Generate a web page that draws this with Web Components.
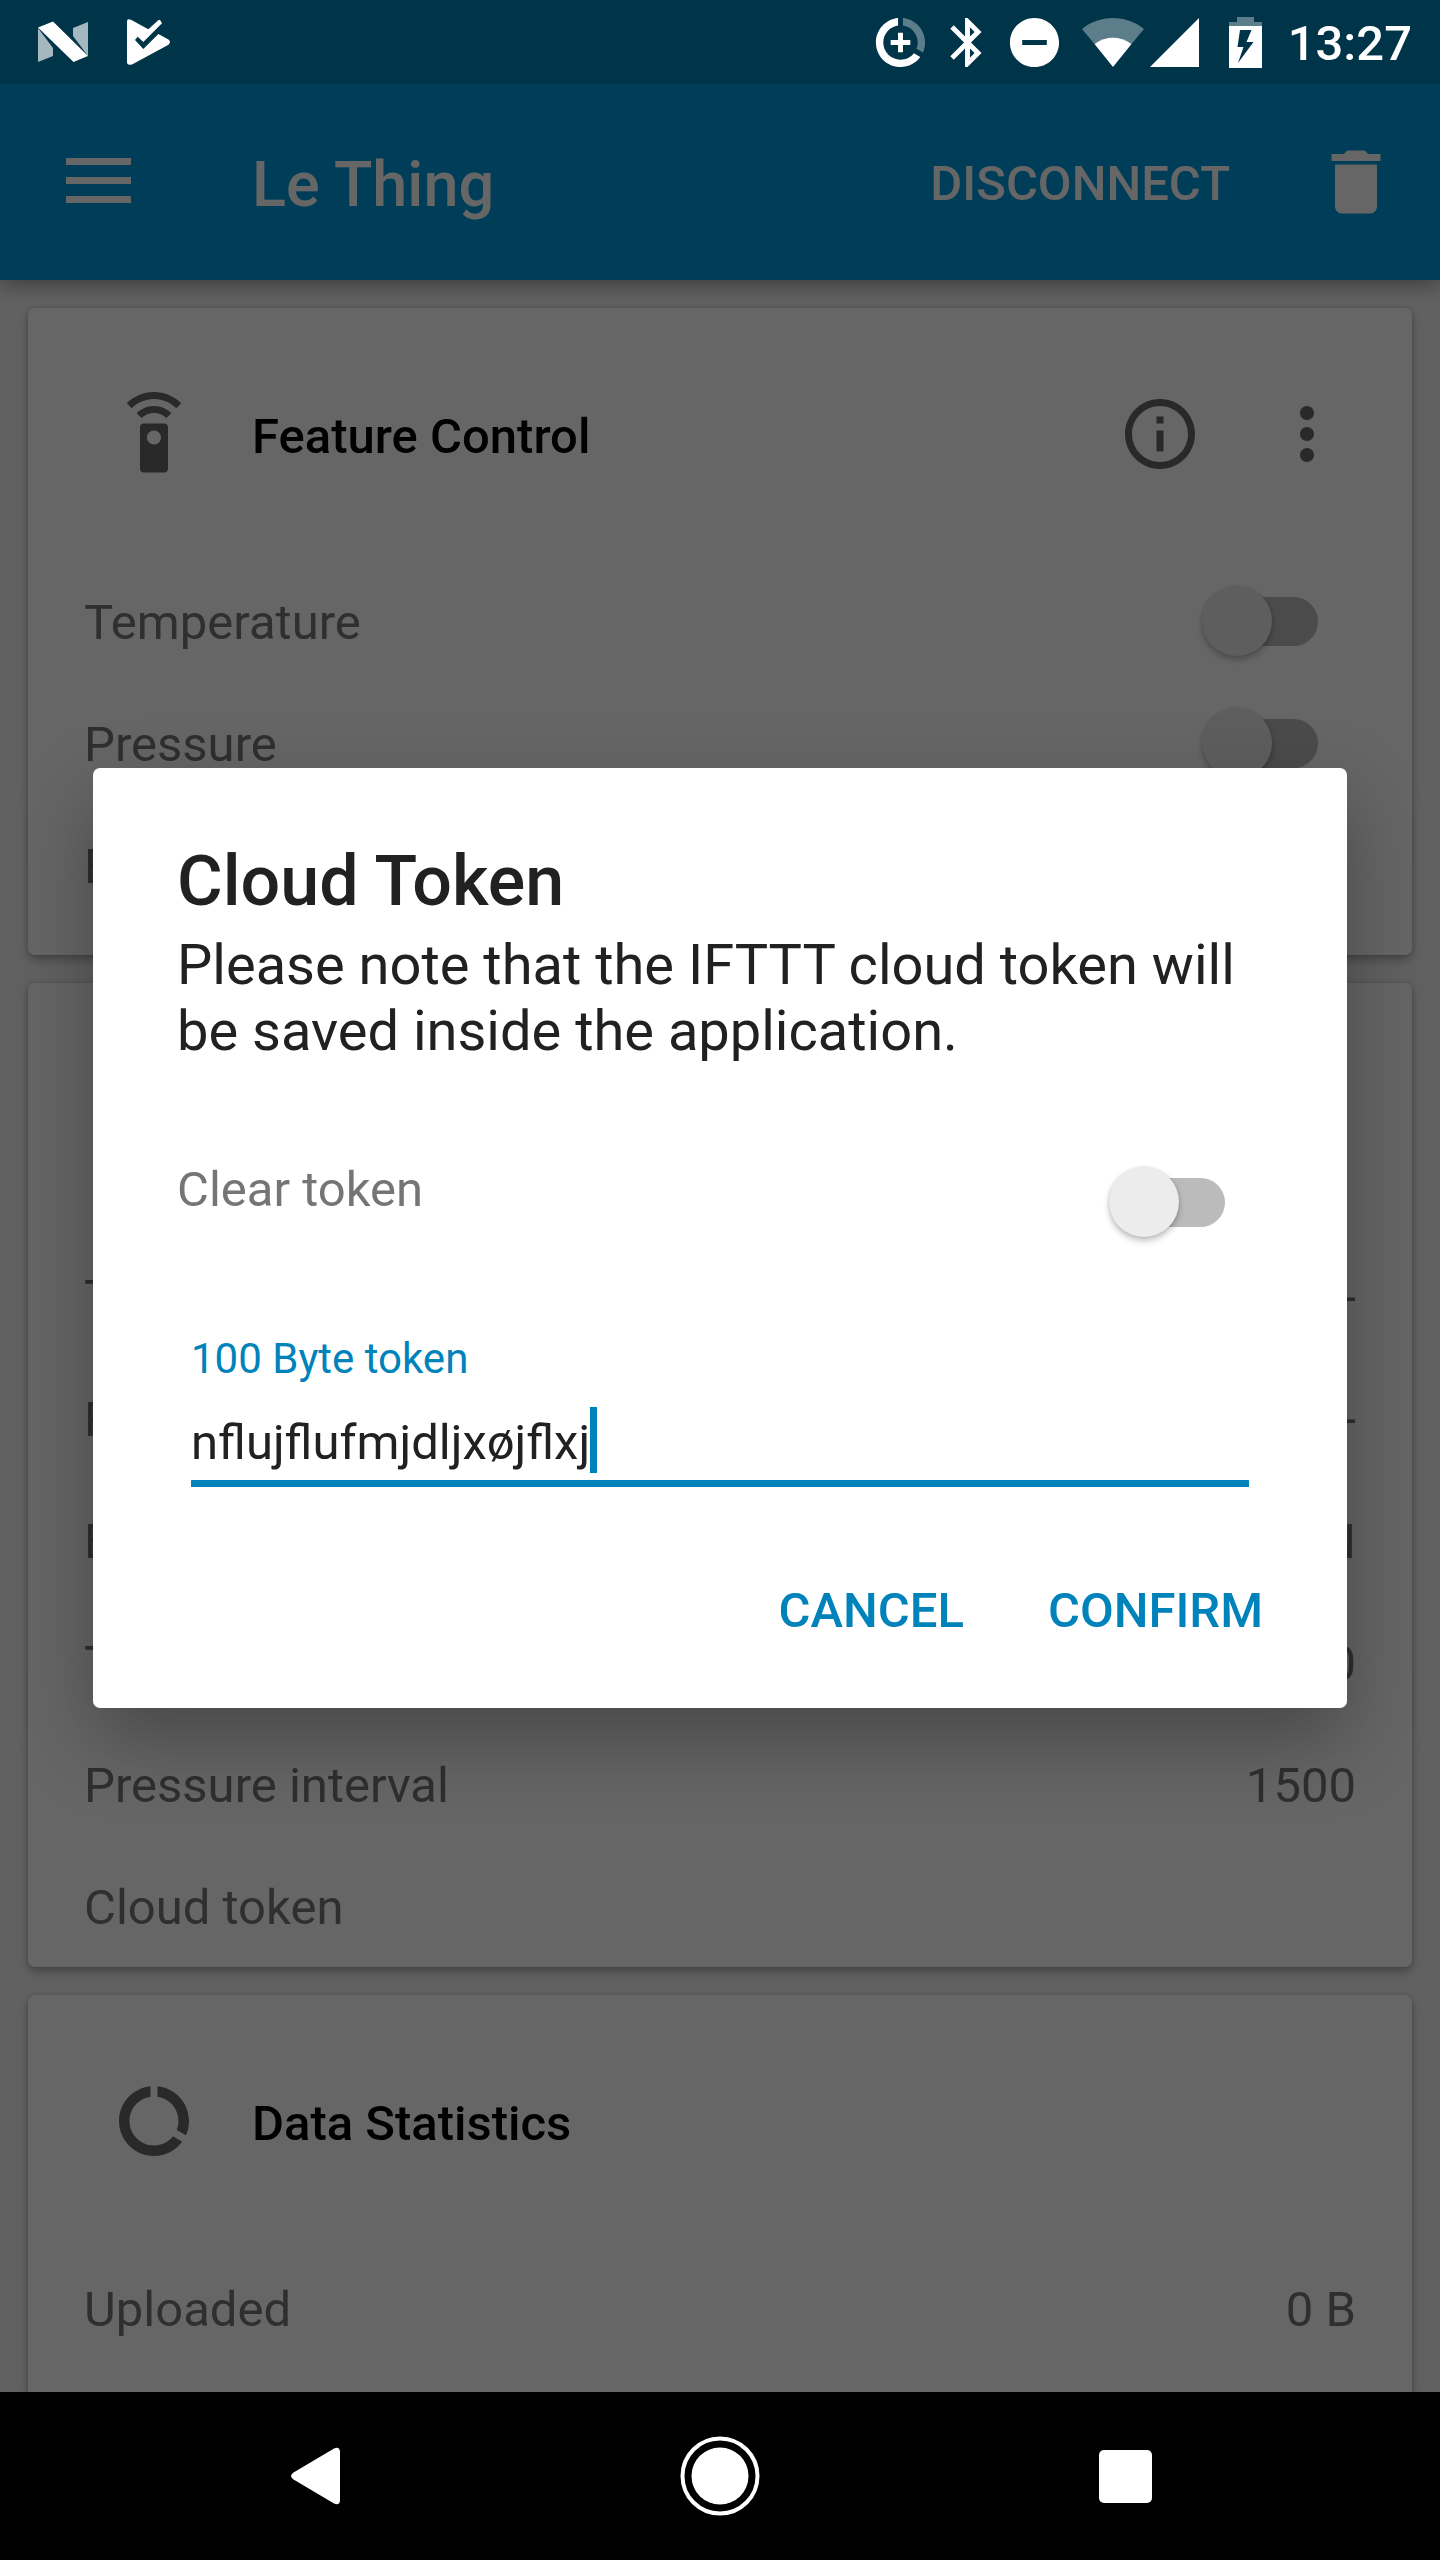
<!DOCTYPE html>
<html lang="en">
<head>
<meta charset="utf-8">
<meta name="viewport" content="width=device-width, initial-scale=1">
<title>Le Thing</title>
<style>
  html, body { margin: 0; background: #000; }
  body {
    --primary: #009ade;
    --accent: #0082ba;
    --status: #003448;
    --grey-text: #757575;
    --icon: #666;
    font-family: Roboto, "Noto Sans", sans-serif;
    font-size: 49px;
    line-height: 58px;
  }
</style>
</head>
<body>
<thing-app>
  <status-bar slot="status" time="13:27"></status-bar>
  <app-bar slot="bar" action="DISCONNECT">Le Thing</app-bar>

  <feature-card icon="remote" actions roomy>
    <span slot="title">Feature Control</span>
    <toggle-row label="Temperature"></toggle-row>
    <toggle-row label="Pressure"></toggle-row>
    <toggle-row label="Button"></toggle-row>
  </feature-card>

  <feature-card icon="usage">
    <span slot="title">Cloud</span>
    <value-row label="Temperature">-</value-row>
    <value-row label="Pressure">-</value-row>
    <value-row label="Button">UNKNOWN</value-row>
    <value-row label="Temperature interval">1500</value-row>
    <value-row label="Pressure interval">1500</value-row>
    <value-row label="Cloud token"></value-row>
  </feature-card>

  <feature-card icon="usage" roomy>
    <span slot="title">Data Statistics</span>
    <value-row label="Uploaded">0 B</value-row>
  </feature-card>

  <token-dialog slot="dialog" heading="Cloud Token" field="100 Byte token" value="nflujflufmjdljxøjflxj">
    Please note that the IFTTT cloud token will be saved inside the application.
  </token-dialog>
  <nav-bar slot="nav"></nav-bar>
</thing-app>

<script>
const ICONS = {
  remote: '<path d="M15 9H9c-.55 0-1 .45-1 1v12c0 .55.45 1 1 1h6c.55 0 1-.45 1-1V10c0-.55-.45-1-1-1zm-3 6c-1.1 0-2-.9-2-2s.9-2 2-2 2 .9 2 2-.9 2-2 2zM7.05 6.05l1.41 1.41C9.37 6.56 10.62 6 12 6s2.63.56 3.54 1.46l1.41-1.41C15.68 4.78 13.93 4 12 4s-3.68.78-4.95 2.05zM12 0C8.96 0 6.21 1.23 4.22 3.22l1.41 1.41C7.26 3.01 9.51 2 12 2s4.74 1.01 6.36 2.64l1.41-1.41C17.79 1.23 15.04 0 12 0z"/>',
  usage: '<path d="M13 2.05v3.03c3.39.49 6 3.39 6 6.92 0 .9-.18 1.75-.48 2.54l2.6 1.53c.56-1.24.88-2.62.88-4.07 0-5.18-3.95-9.45-9-9.95zM12 19c-3.87 0-7-3.13-7-7 0-3.53 2.61-6.43 6-6.92V2.05c-5.06.5-9 4.76-9 9.95 0 5.52 4.47 10 9.99 10 3.31 0 6.24-1.61 8.06-4.09l-2.6-1.53C16.17 17.98 14.21 19 12 19z"/>',
  info: '<path d="M11 17h2v-6h-2v6zm1-15C6.48 2 2 6.48 2 12s4.48 10 10 10 10-4.48 10-10S17.52 2 12 2zm0 18c-4.41 0-8-3.59-8-8s3.59-8 8-8 8 3.59 8 8-3.59 8-8 8zM11 9h2V7h-2v2z"/>',
  more: '<path d="M12 8c1.1 0 2-.9 2-2s-.9-2-2-2-2 .9-2 2 .9 2 2 2zm0 2c-1.1 0-2 .9-2 2s.9 2 2 2 2-.9 2-2-.9-2-2-2zm0 6c-1.1 0-2 .9-2 2s.9 2 2 2 2-.9 2-2-.9-2-2-2z"/>',
  trash: '<path d="M6 19c0 1.1.9 2 2 2h8c1.1 0 2-.9 2-2V7H6v12zM19 4h-3.5l-1-1h-5l-1 1H5v2h14V4z"/>'
};
const icon = name => `<svg class="icon" viewBox="0 0 24 24" aria-hidden="true">${ICONS[name]}</svg>`;

const BASE = `
  :host, *, *::before, *::after { box-sizing: border-box; }
  :host { display: block; }
  svg { display: block; flex: none; fill: currentColor; }
  .icon { width: 84px; height: 84px; }
  button { margin: 0; padding: 0; border: 0; background: none; color: inherit; font: inherit; cursor: pointer; }
`;

class Base extends HTMLElement {
  connectedCallback() {
    if (this.shadowRoot) return;
    const root = this.attachShadow({ mode: "open" });
    root.innerHTML = `<style>${BASE}${this.css()}</style>${this.html()}`;
  }
  attr(name) { return this.getAttribute(name) || ""; }
}

class ThingApp extends Base {
  css() { return `
    :host { display: flex; flex-direction: column; height: 100vh; }
    .screen { position: relative; flex: 1; min-height: 0; overflow: hidden; background: #f2f2f2; }
    .cards { display: flex; flex-direction: column; gap: 28px; padding: 28px; }
    .scrim { position: absolute; inset: 0; display: grid; align-items: center; padding: 0 93px; background: rgba(0,0,0,.6); }
  `; }
  html() { return `
    <slot name="status"></slot>
    <div class="screen">
      <slot name="bar"></slot>
      <main class="cards"><slot></slot></main>
      <div class="scrim"><slot name="dialog"></slot></div>
    </div>
    <slot name="nav"></slot>`; }
}

class StatusBar extends Base {
  css() { return `
    :host { display: flex; flex: none; align-items: center; justify-content: space-between; height: 84px; padding: 0 28px 0 38px; background: var(--status); color: #fff; }
    .notes, .system { display: flex; align-items: center; }
    .notes { gap: 39px; }
    .radios { display: flex; gap: 8px; }
    .signals { display: flex; gap: 6px; margin: 0 30px 0 18px; }
    time { margin-left: 26px; padding-top: 4px; font-weight: 500; }
    .dim { opacity: .36; }
    .half { opacity: .65; }
  `; }
  html() { return `
    <div class="notes">
      <svg width="50" height="42" viewBox="0 0 50 42" aria-hidden="true">
        <path class="half" d="M0 7 15 27V35L0 41zM35 7 50 1V35L35 15z"/>
        <path d="M0 6.500 15 .500 50 35 35.500 41z"/>
      </svg>
      <svg width="43" height="46" viewBox="0 0 43 46" aria-hidden="true">
        <path d="M0 2.500Q0-1 4 .800L21.300 10.300 31.500 1 33 1 35 4.300 16.300 23 10.700 17.700 8 21 16.300 30 31.400 15 41.500 20.500Q44.500 23 41.500 25.800L5.500 45.200Q0 47 0 43z"/>
      </svg>
    </div>
    <div class="system">
      <div class="radios">
        <svg width="59" height="59" viewBox="0 0 24 24" aria-hidden="true">
          <path d="M11 2.050v3.030c-3.390.49-6 3.390-6 6.920 0 3.870 3.130 7 7 7 2.210 0 4.170-1.020 5.450-2.620l2.600 1.530C18.240 20.390 15.310 22 12 22 6.480 22 2 17.520 2 12c0-5.190 3.940-9.450 9-9.950zM11 8h2v3h3v2h-3v3h-2v-3H8v-2h3z"/>
          <path class="dim" d="M13 2.050v3.030c3.390.49 6 3.390 6 6.920 0 .9-.18 1.750-.48 2.540l2.600 1.530c.56-1.240.88-2.620.88-4.070 0-5.180-3.950-9.450-9-9.950z"/>
        </svg>
        <svg width="59" height="59" viewBox="0 0 24 24" aria-hidden="true"><path d="M17.710 7.710L12 2h-1v7.590L6.410 5 5 6.410 10.590 12 5 17.590 6.410 19 11 14.410V22h1l5.710-5.710-4.300-4.290 4.300-4.290zM13 5.830l1.880 1.880L13 9.590V5.830zm1.880 10.460L13 18.170v-3.760l1.880 1.880z"/></svg>
        <svg width="59" height="59" viewBox="0 0 24 24" aria-hidden="true"><path d="M12 2C6.480 2 2 6.480 2 12s4.480 10 10 10 10-4.480 10-10S17.520 2 12 2zm5 11H7v-2h10v2z"/></svg>
      </div>
      <div class="signals">
        <svg width="62" height="49" viewBox="0 0 62 49" aria-hidden="true">
          <path class="dim" d="M31 0C19 0 8.500 4 0 11L12.500 26Q21 19.500 31 19.500T49.500 26L62 11C53.500 4 43 0 31 0z"/>
          <path d="M31 49 12.500 26Q21 19.500 31 19.500T49.500 26z"/>
        </svg>
        <svg width="49" height="49" viewBox="0 0 49 49" aria-hidden="true"><path d="M49 0V49H0z"/></svg>
      </div>
      <svg width="33" height="51" viewBox="0 0 33 51" aria-hidden="true">
        <path class="dim" d="M8 0H25V5H33V9H0V5H8z"/>
        <path fill-rule="evenodd" d="M0 9H33V51H0zM11 13 8.500 30H14.500L9 46 24.500 25H17.500L22.500 13z"/>
      </svg>
      <time>${this.attr("time")}</time>
    </div>`; }
}

class AppBar extends Base {
  css() { return `
    :host { position: relative; display: flex; align-items: center; height: 196px; padding: 0 42px 0 56px; background: var(--primary); color: #fff; box-shadow: 0 6px 18px rgba(0,0,0,.34); }
    h1 { flex: 1; margin: 0 0 0 112px; padding-top: 6px; font-size: 63px; line-height: 74px; font-weight: 500; }
    .text { padding: 4px 0 0; margin-right: 84px; font-weight: 500; }
  `; }
  html() { return `
    <button aria-label="Menu"><svg width="84" height="84" viewBox="0 0 84 84" aria-hidden="true"><path d="M10 18H75V25H10zM10 37H75V44H10zM10 56H75V63H10z"/></svg></button>
    <h1><slot></slot></h1>
    <button class="text">${this.attr("action")}</button>
    <button aria-label="Delete">${icon("trash")}</button>`; }
}

class FeatureCard extends Base {
  css() { return `
    :host { border-radius: 7px; background: #fff; box-shadow: 0 5px 10px rgba(0,0,0,.26), 0 0 5px rgba(0,0,0,.14); }
    :host([roomy]) { padding-bottom: 29px; }
    header { display: flex; align-items: center; height: 252px; padding: 0 63px 0 84px; color: var(--icon); }
    h2 { flex: 1; margin: 0 0 0 56px; padding-top: 6px; font: inherit; font-weight: 500; color: #000; }
    .actions { display: flex; gap: 63px; }
  `; }
  html() { return `
    <header>
      ${icon(this.attr("icon"))}
      <h2><slot name="title"></slot></h2>
      ${this.hasAttribute("actions") ? `<div class="actions">
        <button aria-label="Information">${icon("info")}</button>
        <button aria-label="More options">${icon("more")}</button>
      </div>` : ""}
    </header>
    <slot></slot>`; }
}

const ROW = `
  :host { display: flex; justify-content: space-between; height: 122px; padding: 34px 56px 30px; color: var(--grey-text); }
`;
const SWITCH = `
  input { appearance: none; display: grid; flex: none; align-items: center; width: 116px; height: 70px; margin: 0 38px 0 0; cursor: pointer; }
  input::before, input::after { content: ""; grid-area: 1 / 1; }
  input::before { height: 49px; margin-left: 12px; border-radius: 25px; background: #bbb; }
  input::after { width: 70px; height: 70px; border-radius: 50%; background: #ececec; box-shadow: 0 4px 6px rgba(0,0,0,.24), 0 0 3px rgba(0,0,0,.12); }
  input:checked::after { justify-self: end; background: var(--accent); }
`;

class ToggleRow extends Base {
  css() { return `${ROW}${SWITCH}
    input { margin-top: -8px; }
  `; }
  html() { return `<label for="s">${this.attr("label")}</label><input id="s" type="checkbox" role="switch">`; }
}

class ValueRow extends Base {
  css() { return ROW; }
  html() { return `<span>${this.attr("label")}</span><span><slot></slot></span>`; }
}

class TokenDialog extends Base {
  css() { return `${SWITCH}
    dialog { position: static; width: auto; max-width: none; margin: 0; padding: 72px 84px 68px; border: 0; border-radius: 7px; background: #fff; color: #212121; box-shadow: 0 32px 80px rgba(0,0,0,.3); }
    h2 { margin: 0 0 10px; font-size: 70px; line-height: 82px; font-weight: 500; }
    p { margin: 0; font-size: 56px; line-height: 66px; }
    .clear { display: flex; justify-content: space-between; margin-top: 97px; color: var(--grey-text); }
    .clear input { margin-top: 6px; }
    .token { margin: 97px 14px 0; }
    .token label { display: block; margin-bottom: 23px; font-size: 42px; line-height: 50px; color: var(--accent); }
    .box { display: flex; padding-bottom: 7px; border-bottom: 7px solid var(--accent); }
    .box input { appearance: none; display: block; field-sizing: content; width: auto; min-width: 0; height: 66px; margin: 0; padding: 4px 0 0; border: 0; outline: 0; background: none; color: inherit; font: inherit; cursor: text; }
    .box input::before, .box input::after { content: none; }
    .caret { width: 7px; height: 66px; background: var(--accent); }
    .buttons { display: flex; justify-content: flex-end; gap: 84px; margin-top: 95px; color: var(--accent); }
    .buttons button { font-weight: 500; }
  `; }
  html() { return `
    <dialog open aria-labelledby="h">
      <h2 id="h">${this.attr("heading")}</h2>
      <p><slot></slot></p>
      <div class="clear"><label for="c">Clear token</label><input id="c" type="checkbox" role="switch"></div>
      <div class="token">
        <label for="t">${this.attr("field")}</label>
        <div class="box"><input id="t" type="text" spellcheck="false" value="${this.attr("value")}"><span class="caret"></span></div>
      </div>
      <div class="buttons"><button>CANCEL</button><button>CONFIRM</button></div>
    </dialog>`; }
}

class NavBar extends Base {
  css() { return `
    :host { display: flex; flex: none; height: 168px; padding: 0 112px; background: #000; color: #fff; }
    button { display: grid; flex: 1; place-items: center; }
  `; }
  html() { return `
    <button aria-label="Back"><svg width="84" height="84" viewBox="0 0 84 84" aria-hidden="true"><path d="M61 14.500Q66 12 67 17V67Q66 72 61 69.500L20.500 45.500Q15.500 42 20.500 38.500z"/></svg></button>
    <button aria-label="Home"><svg width="84" height="84" viewBox="0 0 84 84" aria-hidden="true"><circle cx="42" cy="42" r="28.500"/><circle cx="42" cy="42" r="37.500" fill="none" stroke="currentColor" stroke-width="4"/></svg></button>
    <button aria-label="Recent apps"><svg width="84" height="84" viewBox="0 0 84 84" aria-hidden="true"><rect x="16" y="16" width="53" height="53" rx="5"/></svg></button>`; }
}

customElements.define("thing-app", ThingApp);
customElements.define("status-bar", StatusBar);
customElements.define("app-bar", AppBar);
customElements.define("feature-card", FeatureCard);
customElements.define("toggle-row", ToggleRow);
customElements.define("value-row", ValueRow);
customElements.define("token-dialog", TokenDialog);
customElements.define("nav-bar", NavBar);
</script>
</body>
</html>
